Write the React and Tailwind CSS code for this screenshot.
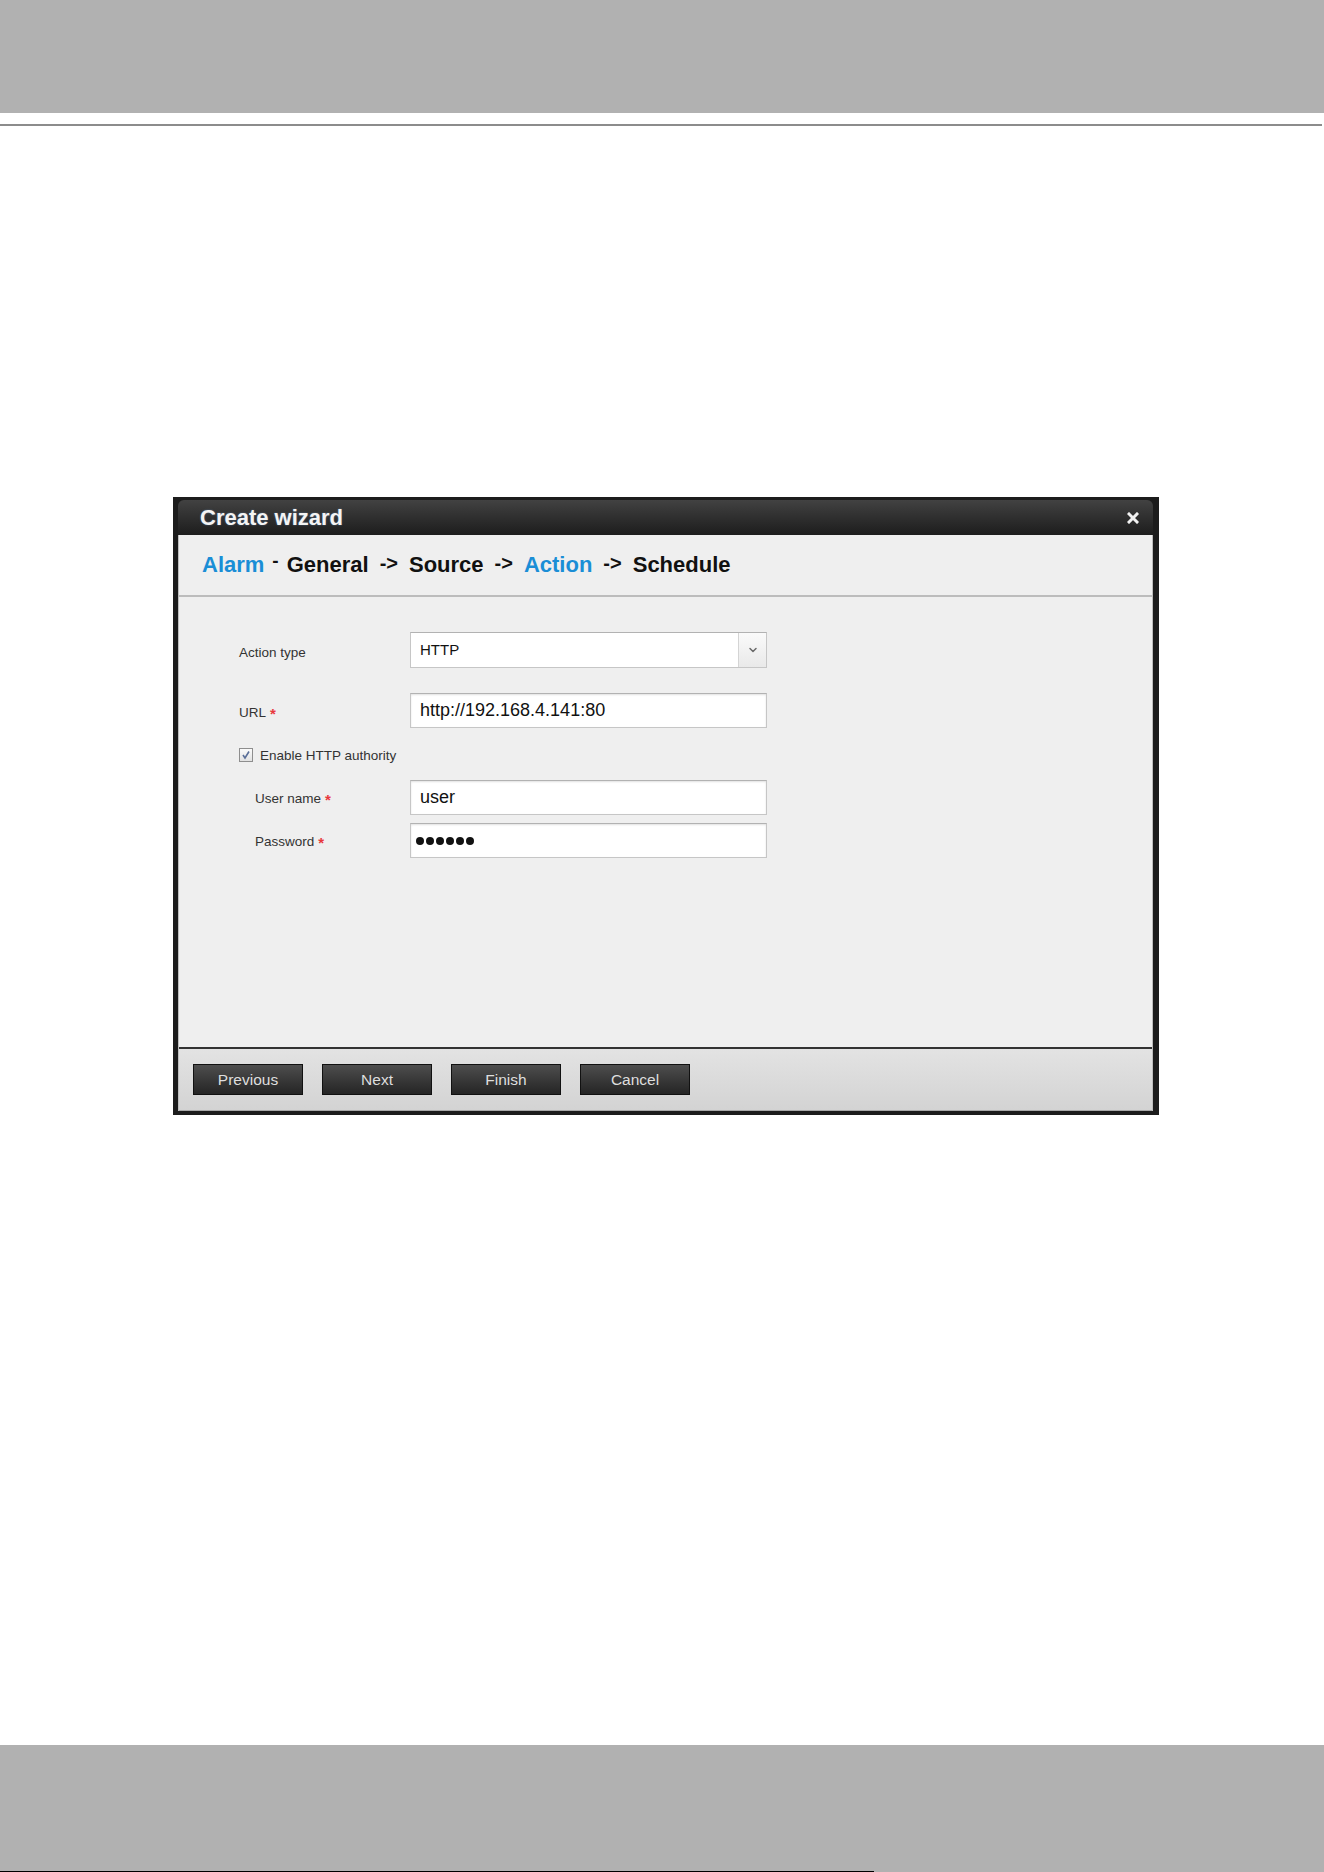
import { ChevronDown } from "lucide-react";

const font = { fontFamily: '"Liberation Sans", Arial, sans-serif' };

function Required() {
  return <span className="ml-[4px] text-[#e8383d] text-[15px] font-bold relative top-[1px]">*</span>;
}

function TextBox({ value }) {
  return (
    <div className="w-[357px] h-full bg-white border border-[#c6c6c6] border-t-[#b2b2b2] shadow-[inset_0_1px_2px_rgba(0,0,0,0.12)] flex items-center pl-[9px] text-[18px] text-[#111]">
      {value}
    </div>
  );
}

export default function App() {
  const buttons = ["Previous", "Next", "Finish", "Cancel"];

  return (
    <div className="w-[1324px] h-[1872px] bg-white flex flex-col" style={font}>
      {/* page header */}
      <div className="h-[113px] bg-[#b1b1b1]" />
      <div className="mt-[11px] h-[2px] w-[1322px] bg-[#8c8c8c]" />

      {/* wizard window */}
      <div className="mt-[371px] ml-[173px] w-[986px] bg-[#1c1c1c] pt-[3px] pl-[5px] pr-[6px] pb-[4px]">
        <div className="h-[35px] rounded-t-[6px] bg-gradient-to-b from-[#424242] to-[#1d1d1d] flex items-center justify-between pl-[22px] pr-[14px]">
          <span className="text-[22px] font-bold text-[#f4f4f4] [text-shadow:0_0_2px_rgba(120,170,230,0.5)]">
            Create wizard
          </span>
          <svg width="12" height="12" viewBox="0 0 12 12">
            <path d="M2 2 L10 10 M10 2 L2 10" stroke="#f2f2f2" strokeWidth="3" strokeLinecap="square" />
          </svg>
        </div>

        <div className="border-x border-[#bdbdbd] bg-[#efefef]">
          {/* breadcrumb */}
          <div className="h-[62px] border-b-2 border-[#bcbcbc] flex items-center pl-[23px] pb-[1px] text-[22px] font-bold text-[#111]">
            <span className="text-[#1a8ed6]">Alarm</span>
            <span className="mx-[8px] relative -top-[3px] text-[19px]">-</span>
            <span>General</span>
            <span className="mx-[11px] relative -top-[2px] text-[20px]">-&gt;</span>
            <span>Source</span>
            <span className="mx-[11px] relative -top-[2px] text-[20px]">-&gt;</span>
            <span className="text-[#1a8ed6]">Action</span>
            <span className="mx-[11px] relative -top-[2px] text-[20px]">-&gt;</span>
            <span>Schedule</span>
          </div>

          {/* form */}
          <div className="h-[450px] pt-[35px] pl-[60px] flex flex-col text-[13.5px] text-[#333]">
            <div className="flex items-center h-[36px]">
              <span className="w-[171px] relative top-[3px]">Action type</span>
              <div className="w-[357px] h-full bg-white border border-[#c6c6c6] border-t-[#b2b2b2] flex">
                <div className="flex-1 flex items-center pl-[9px] text-[15px] text-[#111]">HTTP</div>
                <div className="w-[28px] border-l border-[#d4d4d4] bg-gradient-to-b from-[#fafafa] to-[#e9e9e9] flex items-center justify-center">
                  <ChevronDown size={12} strokeWidth={3} className="text-[#6a6a6a]" />
                </div>
              </div>
            </div>

            <div className="flex items-center h-[35px] mt-[25px]">
              <span className="w-[171px] flex items-center relative top-[3px]">
                URL
                <Required />
              </span>
              <TextBox value="http://192.168.4.141:80" />
            </div>

            <div className="flex items-center h-[14px] mt-[20px]">
              <div className="w-[14px] h-[14px] border border-[#8e8e8e] bg-gradient-to-b from-[#fbfbfb] to-[#e2e2e2] flex items-center justify-center">
                <svg width="10" height="10" viewBox="0 0 10 10">
                  <path d="M2 5 L4 8 L8 1.5" fill="none" stroke="#5a6f98" strokeWidth="1.6" />
                </svg>
              </div>
              <span className="ml-[7px] relative top-[1px]">Enable HTTP authority</span>
            </div>

            <div className="flex items-center h-[35px] mt-[18px]">
              <span className="w-[171px] pl-[16px] flex items-center relative top-[2px]">
                User name
                <Required />
              </span>
              <TextBox value="user" />
            </div>

            <div className="flex items-center h-[35px] mt-[8px]">
              <span className="w-[171px] pl-[16px] flex items-center relative top-[2px]">
                Password
                <Required />
              </span>
              <div className="w-[357px] h-full bg-white border border-[#c6c6c6] border-t-[#b2b2b2] shadow-[inset_0_1px_2px_rgba(0,0,0,0.12)] flex items-center pl-[5px] gap-[2px]">
                {[0, 1, 2, 3, 4, 5].map((i) => (
                  <span key={i} className="w-[8px] h-[8px] rounded-full bg-[#111]" />
                ))}
              </div>
            </div>
          </div>

          {/* footer buttons */}
          <div className="h-[64px] border-t-2 border-[#333] border-b border-b-[#a8a8a8] bg-gradient-to-b from-[#e3e3e3] to-[#d3d3d3] flex items-start pt-[15px] pl-[14px] gap-[19px]">
            {buttons.map((b) => (
              <button
                key={b}
                className="w-[110px] h-[31px] border border-[#111] bg-gradient-to-b from-[#4e4e4e] to-[#252525] text-[15.5px] text-[#dedede] flex items-center justify-center"
              >
                {b}
              </button>
            ))}
          </div>
        </div>
      </div>

      {/* page footer */}
      <div className="mt-auto h-[127px] bg-[#b1b1b1] flex flex-col justify-end">
        <div className="h-[1px] w-[874px] bg-black" />
      </div>
    </div>
  );
}
